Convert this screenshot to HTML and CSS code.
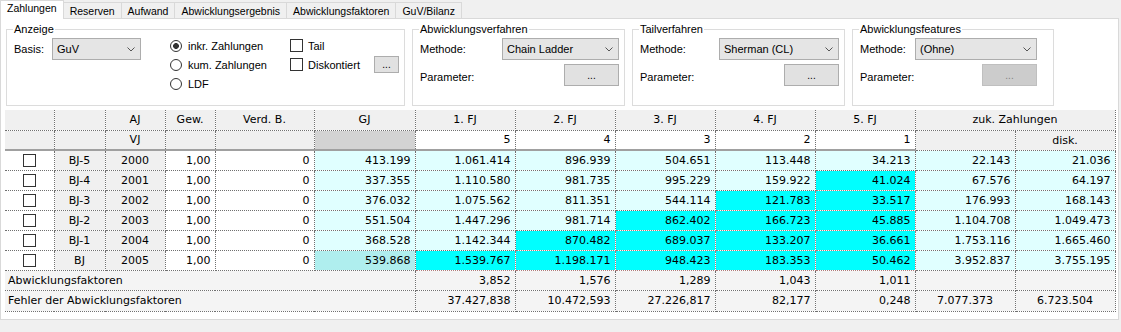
FILE: index.html
```html
<!DOCTYPE html>
<html>
<head>
	<meta charset="utf-8">
	<link rel="stylesheet" href="styles.css">
</head>
<body>
	<div class="tabs">
		<div class="tab tab-active">Zahlungen</div>
		<div class="tab">Reserven</div>
		<div class="tab">Aufwand</div>
		<div class="tab">Abwicklungsergebnis</div>
		<div class="tab">Abwicklungsfaktoren</div>
		<div class="tab">GuV/Bilanz</div>
	</div>

	<div class="panel">
		<div class="groups">
			<fieldset class="group g-anzeige">
				<legend>Anzeige</legend>
				<div class="anzeige-body">
					<div class="basis">
						<span class="basis-label">Basis:</span>
						<div class="combo combo-basis">GuV<svg width="8" height="5" viewBox="0 0 8 5"><polyline points="0.5,0.5 4,4 7.5,0.5" fill="none" stroke="#555" stroke-width="1"/></svg></div>
					</div>
					<div class="radios">
						<div class="opt"><span class="radio radio-on"></span>inkr. Zahlungen</div>
						<div class="opt"><span class="radio"></span>kum. Zahlungen</div>
						<div class="opt"><span class="radio"></span>LDF</div>
					</div>
					<div class="checks">
						<div class="opt"><span class="check"></span>Tail</div>
						<div class="opt"><span class="check"></span>Diskontiert<span class="btn btn-small">...</span></div>
					</div>
				</div>
			</fieldset>

			<fieldset class="group g-abw">
				<legend>Abwicklungsverfahren</legend>
				<div class="form">
					<span>Methode:</span>
					<div class="combo">Chain Ladder<svg width="8" height="5" viewBox="0 0 8 5"><polyline points="0.5,0.5 4,4 7.5,0.5" fill="none" stroke="#555" stroke-width="1"/></svg></div>
					<span class="param-label">Parameter:</span>
					<div class="btn btn-param">...</div>
				</div>
			</fieldset>

			<fieldset class="group g-tail">
				<legend>Tailverfahren</legend>
				<div class="form">
					<span>Methode:</span>
					<div class="combo">Sherman (CL)<svg width="8" height="5" viewBox="0 0 8 5"><polyline points="0.5,0.5 4,4 7.5,0.5" fill="none" stroke="#555" stroke-width="1"/></svg></div>
					<span class="param-label">Parameter:</span>
					<div class="btn btn-param">...</div>
				</div>
			</fieldset>

			<fieldset class="group g-feat">
				<legend>Abwicklungsfeatures</legend>
				<div class="form">
					<span>Methode:</span>
					<div class="combo">(Ohne)<svg width="8" height="5" viewBox="0 0 8 5"><polyline points="0.5,0.5 4,4 7.5,0.5" fill="none" stroke="#555" stroke-width="1"/></svg></div>
					<span class="param-label">Parameter:</span>
					<div class="btn btn-param btn-disabled">...</div>
				</div>
			</fieldset>
		</div>

		<table class="grid">
			<colgroup>
				<col class="col-chk">
				<col class="col-bj">
				<col class="col-aj">
				<col class="col-gew">
				<col class="col-verd">
				<col class="col-gj">
				<col class="col-fj">
				<col class="col-fj">
				<col class="col-fj">
				<col class="col-fj">
				<col class="col-fj">
				<col class="col-fj">
				<col class="col-fj">
			</colgroup>
			<tr class="head1">
				<td></td>
				<td></td>
				<td class="m">AJ</td>
				<td class="m">Gew.</td>
				<td class="m">Verd. B.</td>
				<td class="m">GJ</td>
				<td class="m">1. FJ</td>
				<td class="m">2. FJ</td>
				<td class="m">3. FJ</td>
				<td class="m">4. FJ</td>
				<td class="m">5. FJ</td>
				<td class="m" colspan="2">zuk. Zahlungen</td>
			</tr>
			<tr class="head2">
				<td class="thick"></td>
				<td class="thick"></td>
				<td class="m thick">VJ</td>
				<td class="thick"></td>
				<td class="thick"></td>
				<td class="thick gj-head"></td>
				<td class="n thick w">5</td>
				<td class="n thick w">4</td>
				<td class="n thick w">3</td>
				<td class="n thick w">2</td>
				<td class="n thick w">1</td>
				<td></td>
				<td class="m">disk.</td>
			</tr>
			<tr>
				<td class="w"><span class="check"></span></td>
				<td class="m">BJ-5</td><td class="m">2000</td>
				<td class="n w">1,00</td><td class="n w">0</td>
				<td class="n lc">413.199</td>
				<td class="n lc">1.061.414</td><td class="n lc">896.939</td><td class="n lc">504.651</td><td class="n lc">113.448</td><td class="n lc">34.213</td>
				<td class="n lc">22.143</td><td class="n lc">21.036</td>
			</tr>
			<tr>
				<td class="w"><span class="check"></span></td>
				<td class="m">BJ-4</td><td class="m">2001</td>
				<td class="n w">1,00</td><td class="n w">0</td>
				<td class="n lc">337.355</td>
				<td class="n lc">1.110.580</td><td class="n lc">981.735</td><td class="n lc">995.229</td><td class="n lc">159.922</td><td class="n cy">41.024</td>
				<td class="n lc">67.576</td><td class="n lc">64.197</td>
			</tr>
			<tr>
				<td class="w"><span class="check"></span></td>
				<td class="m">BJ-3</td><td class="m">2002</td>
				<td class="n w">1,00</td><td class="n w">0</td>
				<td class="n lc">376.032</td>
				<td class="n lc">1.075.562</td><td class="n lc">811.351</td><td class="n lc">544.114</td><td class="n cy">121.783</td><td class="n cy">33.517</td>
				<td class="n lc">176.993</td><td class="n lc">168.143</td>
			</tr>
			<tr>
				<td class="w"><span class="check"></span></td>
				<td class="m">BJ-2</td><td class="m">2003</td>
				<td class="n w">1,00</td><td class="n w">0</td>
				<td class="n lc">551.504</td>
				<td class="n lc">1.447.296</td><td class="n lc">981.714</td><td class="n cy">862.402</td><td class="n cy">166.723</td><td class="n cy">45.885</td>
				<td class="n lc">1.104.708</td><td class="n lc">1.049.473</td>
			</tr>
			<tr>
				<td class="w"><span class="check"></span></td>
				<td class="m">BJ-1</td><td class="m">2004</td>
				<td class="n w">1,00</td><td class="n w">0</td>
				<td class="n lc">368.528</td>
				<td class="n lc">1.142.344</td><td class="n cy">870.482</td><td class="n cy">689.037</td><td class="n cy">133.207</td><td class="n cy">36.661</td>
				<td class="n lc">1.753.116</td><td class="n lc">1.665.460</td>
			</tr>
			<tr>
				<td class="w"><span class="check"></span></td>
				<td class="m">BJ</td><td class="m">2005</td>
				<td class="n w">1,00</td><td class="n w">0</td>
				<td class="n pt">539.868</td>
				<td class="n cy">1.539.767</td><td class="n cy">1.198.171</td><td class="n cy">948.423</td><td class="n cy">183.353</td><td class="n cy">50.462</td>
				<td class="n lc">3.952.837</td><td class="n lc">3.755.195</td>
			</tr>
			<tr class="foot">
				<td class="label" colspan="6">Abwicklungsfaktoren</td>
				<td class="n">3,852</td><td class="n">1,576</td><td class="n">1,289</td><td class="n">1,043</td><td class="n">1,011</td>
				<td></td><td></td>
			</tr>
			<tr class="foot last">
				<td class="label" colspan="6">Fehler der Abwicklungsfaktoren</td>
				<td class="n">37.427,838</td><td class="n">10.472,593</td><td class="n">27.226,817</td><td class="n">82,177</td><td class="n">0,248</td>
				<td class="m">7.077.373</td><td class="m">6.723.504</td>
			</tr>
		</table>
	</div>
</body>
</html>
```

FILE: styles.css
```css
body {
	margin: 0;
	background-color: #f0f0f0;
	font-family: "Liberation Sans", Arial, sans-serif;
	font-size: 11px;
	color: #000;
}

/* tab strip */
.tabs {
	display: flex;
	align-items: flex-end;
	height: 18px;
}

.tab {
	height: 16px;
	box-sizing: border-box;
	padding: 2px 6px 0;
	line-height: 13px;
	font-size: 10.5px;
	border: 1px solid #d9d9d9;
	border-left: none;
	border-bottom: none;
	background-color: #f0f0f0;
}

.tab-active {
	position: relative;
	z-index: 1;
	height: 19px;
	margin-bottom: -1px;
	padding-top: 1px;
	border-left: 1px solid #d9d9d9;
	background-color: #fff;
}

.panel {
	width: 1119px;
	height: 302px;
	box-sizing: border-box;
	border: 1px solid #d9d9d9;
	background-color: #fff;
}

/* group boxes */
.groups {
	display: flex;
	gap: 7px;
	margin: 4px 0 0 5px;
}

.group {
	margin: 0;
	padding: 0 5px 0 7px;
	height: 83px;
	box-sizing: border-box;
	min-width: 0;
	border: 1px solid #dcdcdc;
}

.group legend {
	padding: 0 1px;
	margin-left: -1px;
	line-height: 13px;
}

.g-anzeige { width: 399px; }
.g-abw { width: 213px; }
.g-tail { width: 213px; }
.g-feat { width: 202px; }

.anzeige-body {
	display: flex;
}

.basis {
	display: flex;
	align-items: center;
	width: 156px;
	height: 22px;
	margin-top: 2px;
}

.basis-label {
	width: 38px;
}

.radios {
	display: flex;
	flex-direction: column;
	width: 120px;
}

.checks {
	display: flex;
	flex-direction: column;
	flex: 1;
}

.opt {
	display: flex;
	align-items: center;
	height: 19px;
}

.radio {
	width: 12px;
	height: 12px;
	margin-right: 6px;
	box-sizing: border-box;
	border: 1px solid #333;
	border-radius: 50%;
	background-color: #fff;
}

.radio-on {
	background: radial-gradient(circle, #333 0 2.6px, #fff 3.2px);
}

.check {
	display: inline-block;
	width: 13px;
	height: 13px;
	margin-right: 5px;
	box-sizing: border-box;
	border: 1px solid #333;
	background-color: #fff;
}

.form {
	display: grid;
	grid-auto-rows: 22px;
	row-gap: 4px;
	align-items: center;
	margin-top: 2px;
}

.g-abw .form { grid-template-columns: 82px 117px; }
.g-tail .form { grid-template-columns: 79px 120px; }
.g-feat .form { grid-template-columns: 55px 122px; }

.param-label {
	padding-top: 3px;
}

.combo {
	display: flex;
	align-items: center;
	justify-content: space-between;
	height: 22px;
	box-sizing: border-box;
	padding: 0 5px 0 4px;
	border: 1px solid #adadad;
	background-color: #e5e5e5;
}

.combo-basis {
	width: 89px;
}

.btn {
	display: flex;
	align-items: center;
	justify-content: center;
	box-sizing: border-box;
	border: 1px solid #adadad;
	background-color: #e1e1e1;
	font-size: 10px;
}

.btn-small {
	width: 25px;
	height: 17px;
	margin-left: auto;
}

.btn-param {
	width: 55px;
	height: 22px;
	justify-self: end;
}

.btn-disabled {
	border-color: #bfbfbf;
	background-color: #cccccc;
	color: #838383;
}

/* data grid */
.grid {
	margin: 4px 0 0 4px;
	width: 1110px;
	table-layout: fixed;
	border-collapse: collapse;
	font-family: "DejaVu Sans", Verdana, sans-serif;
	font-size: 11px;
}

.col-chk { width: 49px; }
.col-bj { width: 51px; }
.col-aj { width: 60px; }
.col-gew { width: 50px; }
.col-verd { width: 99px; }
.col-gj { width: 101px; }
.col-fj { width: 100px; }

.grid tr {
	height: 20px;
}

.grid td {
	padding: 0 4px;
	border: none;
	border-right: 1px dotted #707070;
	border-bottom: 1px dotted #707070;
	background-color: #f0f0f0;
	white-space: nowrap;
	overflow: hidden;
}

.grid td.thick {
	border-bottom: 2px solid #a0a0a0;
}

.grid .n { text-align: right; }
.grid .m { text-align: center; }

.grid td.w { background-color: #fff; }
.grid td.gj-head { background-color: #d3d3d3; }
.grid td.lc { background-color: #e0ffff; }
.grid td.pt { background-color: #afeeee; }

.grid td.cy {
	background-color: #00ffff;
	border-color: #b07a7a;
}

.grid td .check {
	display: block;
	margin: 0 auto;
}

.grid .foot td {
	background-color: #f4f4f4;
}

.grid .foot .label {
	padding-left: 3px;
}

.grid .last {
	height: 21px;
}
```
